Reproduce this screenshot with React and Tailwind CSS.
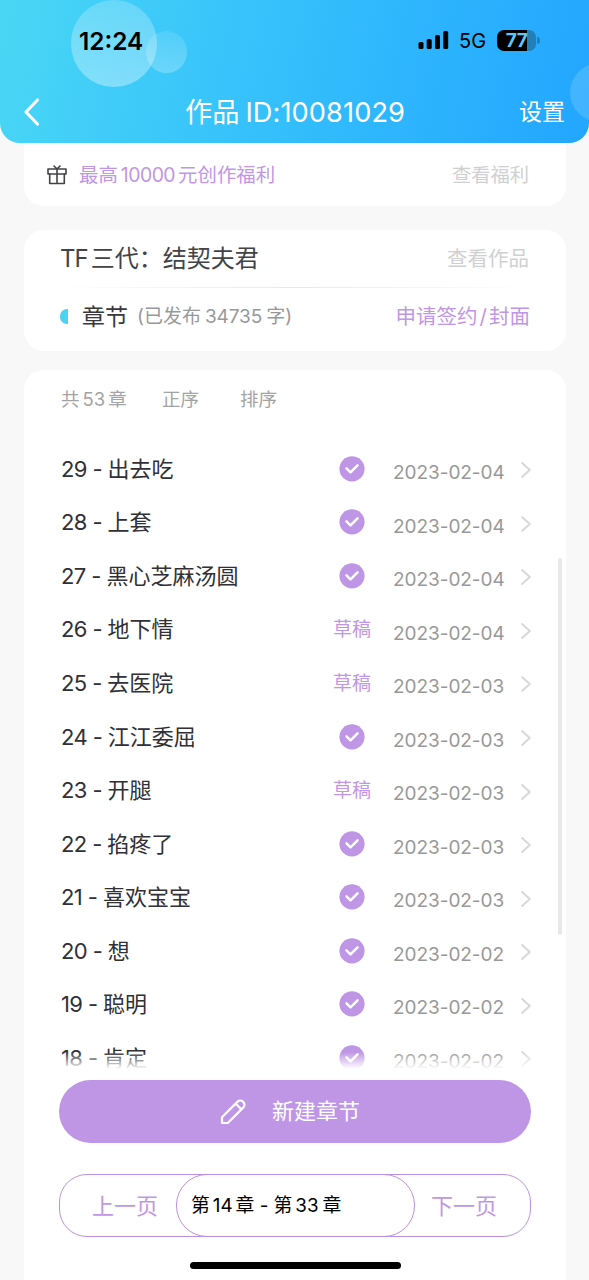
const chapters = [
  { no: 29, title: '出去吃', date: '2023-02-04' },
  { no: 28, title: '上套', date: '2023-02-04' },
  { no: 27, title: '黑心芝麻汤圆', date: '2023-02-04' },
  { no: 26, title: '地下情', date: '2023-02-04', draft: true },
  { no: 25, title: '去医院', date: '2023-02-03', draft: true },
  { no: 24, title: '江江委屈', date: '2023-02-03' },
  { no: 23, title: '开腿', date: '2023-02-03', draft: true },
  { no: 22, title: '掐疼了', date: '2023-02-03' },
  { no: 21, title: '喜欢宝宝', date: '2023-02-03' },
  { no: 20, title: '想', date: '2023-02-02' },
  { no: 19, title: '聪明', date: '2023-02-02' },
  { no: 18, title: '肯定', date: '2023-02-02' },
]

function StatusBar() {
  return (
    <div className="relative flex h-[80px] items-center text-black">
      <span className="ml-[79px] w-[339px] pt-[2px] text-[24.3px] font-semibold leading-none">12:24</span>
      <svg width="31" height="20" viewBox="0 0 31 20" className="shrink-0">
        <rect x="0.5" y="12" width="5" height="7" rx="1.5" />
        <rect x="8.7" y="9" width="5" height="10" rx="1.5" />
        <rect x="17" y="5" width="5" height="14" rx="1.5" />
        <rect x="25.2" y="1" width="5" height="18" rx="1.5" />
      </svg>
      <span className="ml-[10px] w-[38px] pt-[2px] text-[20px] leading-none">5G</span>
      <div className="flex h-[21px] w-[39px] items-center justify-center rounded-[7px] bg-[linear-gradient(90deg,#000_76%,#237fb5_76%)]">
        <span className="text-[19px] font-bold leading-none tracking-[-0.5px] text-[#62c6fb]">77</span>
      </div>
      <div className="ml-[1px] h-[7px] w-[3px] rounded-r-full bg-[#237fb5]" />
    </div>
  )
}

function Header() {
  return (
    <header className="relative z-10 h-[143px] shrink-0 overflow-hidden rounded-b-[20px] bg-[linear-gradient(102deg,#49d7f5_0%,#37c2fb_42%,#22a6ff_100%)]">
      <div className="absolute left-[146px] top-[31px] h-[42px] w-[41px] rounded-full bg-linear-to-b from-white/10 to-white/25" />
      <div className="absolute left-[71px] top-0 h-[87px] w-[86px] rounded-full bg-linear-to-b from-white/20 to-white/35" />
      <div className="absolute left-[570px] top-[63px] h-[59px] w-[59px] rounded-full bg-white/15" />
      <StatusBar />
      <div className="relative flex h-[63px] items-center text-white">
        <svg width="18" height="30" viewBox="0 0 18 30" className="ml-[23px] shrink-0" fill="none" stroke="currentColor" strokeWidth="3.2" strokeLinecap="round" strokeLinejoin="round">
          <path d="M14.5 3 3 15l11.5 12" />
        </svg>
        <h1 className="ml-[144px] w-[334px] whitespace-nowrap pt-[2px] text-[27.2px] leading-none">
          作品<span className="ml-[6px] tracking-[0.1px]">ID:10081029</span>
        </h1>
        <span className="pt-[2px] text-[23px] leading-none">设置</span>
      </div>
    </header>
  )
}

function GiftIcon() {
  return (
    <svg width="20" height="20" viewBox="0 0 20 20" className="shrink-0" fill="none" stroke="#434347" strokeWidth="1.6" strokeLinejoin="round" strokeLinecap="round">
      <rect x="1" y="4" width="18" height="5" />
      <path d="M2.7 9v9.5h14.6V9M10 4v14.5M7 1l3 3 3-3" />
    </svg>
  )
}

function ChapterRow({ no, title, date, draft }) {
  return (
    <li className="flex h-[53.55px] items-center">
      <span className="w-[272px] shrink-0 whitespace-nowrap pt-[1px] text-[22px] text-[#303036]">
        <span className="tracking-[-0.6px]">{no} - </span>{title}
      </span>
      <span className="flex w-[38px] shrink-0 justify-center">
        {draft ? (
          <span className="mt-[2px] whitespace-nowrap text-[19px] text-[#c096e6]">草稿</span>
        ) : (
          <svg width="26" height="26" viewBox="0 0 26 26" fill="none">
            <circle cx="13" cy="12.8" r="12.6" fill="#bf95e6" />
            <path d="m7.5 12.4 4 3.9 7-7" stroke="#fff" strokeWidth="2.5" strokeLinecap="round" strokeLinejoin="round" />
          </svg>
        )}
      </span>
      <span className="ml-[22px] mt-[9px] w-[127px] shrink-0 text-[19px] tracking-[-0.05px] text-[#98989a]">{date}</span>
      <svg width="13" height="20" viewBox="0 0 13 20" className="mt-[3px]" fill="none" stroke="#d8d8d8" strokeWidth="2.4" strokeLinecap="round" strokeLinejoin="round">
        <path d="m2.5 1.8 9 8.2-9 8.2" />
      </svg>
    </li>
  )
}

export default function App() {
  return (
    <div className="flex h-[1280px] w-[589px] flex-col overflow-hidden bg-[#f8f8f8] font-['Inter','Noto_Sans_CJK_SC',sans-serif]">
      <Header />

      <section className="mx-[24px] flex h-[63px] w-[542px] shrink-0 items-center rounded-b-[20px] bg-white pl-[23px] pr-[37px]">
        <GiftIcon />
        <span className="ml-[12px] flex-1 pt-[2px] text-[19.4px] text-[#c096e6]">
          最高<span className="ml-[3px] mr-[3px] tracking-[-0.5px]">10000</span>元创作福利
        </span>
        <span className="pt-[2px] text-[19.3px] text-[#d0d0d2]">查看福利</span>
      </section>

      <section className="mx-[24px] mt-[24px] h-[121px] w-[542px] shrink-0 rounded-[20px] bg-white pl-[36px] pr-[37px]">
        <div className="flex h-[57px] items-center justify-between pt-[1px]">
          <span className="text-[24px] text-[#434347]">
            <span className="tracking-[-1px]">TF</span><span className="ml-[3px]">三代：结契夫君</span>
          </span>
          <span className="text-[20.5px] text-[#d0d0d2]">查看作品</span>
        </div>
        <div className="h-[1px] bg-linear-to-r from-white via-[#e9e9ec] to-white" />
        <div className="flex h-[57px] items-center">
          <span className="h-[15px] w-[8px] rounded-l-[7px] bg-[#4dd2f2]" />
          <span className="ml-[14px] pt-[2px] text-[23px] text-[#38383c]">章节</span>
          <span className="ml-[9px] flex-1 pt-[2px] text-[19px] text-[#98989a]">
            (已发布<span className="mx-[4px] tracking-[-0.1px]">34735</span>字)
          </span>
          <span className="-mr-[1px] pt-[2px] text-[20.5px] text-[#c096e6]">
            申请签约<span className="mx-[2px]">/</span>封面
          </span>
        </div>
      </section>

      <section className="relative mx-[24px] mt-[19px] flex w-[542px] flex-1 flex-col rounded-t-[20px] bg-white px-[35px]">
        <div className="ml-[2px] flex h-[58px] shrink-0 items-center pt-[1px] text-[18.5px] text-[#a3a3a5]">
          <span className="w-[101px]">共<span className="mx-[3px]">53</span>章</span>
          <span className="w-[78px]">正序</span>
          <span>排序</span>
        </div>

        <ul className="ml-[2px] mt-[14px] h-[628px] shrink-0">
          {chapters.map((c) => (
            <ChapterRow key={c.no} {...c} />
          ))}
        </ul>
        {/* list fades out above the button */}
        <div className="absolute left-[35px] top-[682px] h-[28px] w-[472px] bg-[linear-gradient(transparent,#fff_17px)]" />

        <button className="relative mt-[10px] flex h-[63px] w-[472px] shrink-0 items-center rounded-full bg-[#bf95e6] pl-[161px] text-white">
          <svg width="27" height="27" viewBox="0 0 27 27" fill="none" stroke="currentColor" strokeWidth="2.2" strokeLinejoin="round">
            <path d="M2 25v-5.8L17.6 3.6a3.6 3.6 0 0 1 5.2 0l.6.6a3.6 3.6 0 0 1 0 5.2L7.8 25ZM15.8 5.8l5.6 5.6" />
          </svg>
          <span className="ml-[25px] text-[22px]">新建章节</span>
        </button>

        <div className="mt-[31px] flex h-[63px] w-[472px] shrink-0 items-center rounded-[28px] border border-[#bb90e0] text-[22px] text-[#c096e6]">
          <span className="w-[116px] pl-[32px] pt-[1px]">上一页</span>
          <span className="-my-[1px] flex h-[63px] w-[239px] items-center rounded-[31px] border border-[#bb90e0] pl-[14px] pt-[1px] text-[18.8px] text-black">
            第<span className="mx-[3px]">14</span>章 - 第<span className="ml-[3px] mr-[4px]">33</span>章
          </span>
          <span className="ml-[16px] pt-[1px]">下一页</span>
        </div>

        <div className="absolute left-[534px] top-[188px] h-[377px] w-[4px] rounded-full bg-[#e8e8e8]" />
        <div className="absolute bottom-[11px] left-[166px] h-[7px] w-[211px] rounded-full bg-black" />
      </section>
    </div>
  )
}
